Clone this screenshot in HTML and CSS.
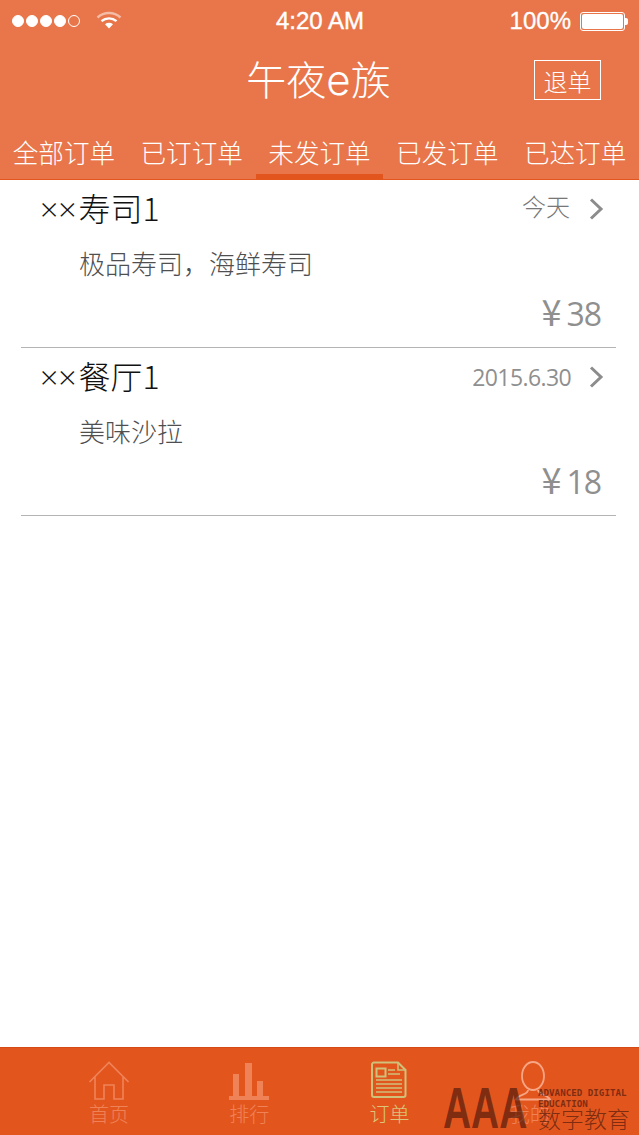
FILE: index.html
```html
<!DOCTYPE html>
<html lang="zh-CN">
<head>
<meta charset="utf-8">
<title>午夜e族</title>
<link rel="stylesheet" href="styles.css">
</head>
<body>
<div class="app">
  <header class="header">
    <div class="status">
      <div class="status-left">
        <span class="dots"><i class="dot"></i><i class="dot"></i><i class="dot"></i><i class="dot"></i><i class="dot dot-empty"></i></span>
        <svg class="wifi" width="26" height="20" viewBox="0 0 26 20"><path d="M1.500 7.500C8 1.500 18 1.500 24.500 7.500" fill="none" stroke="#fff" stroke-opacity=".5" stroke-width="2.400"/><path d="M5.500 11.200C9.800 7.400 16.200 7.400 20.500 11.200" fill="none" stroke="#fff" stroke-width="2.400"/><path d="M9 14.200C11.400 12.400 14.600 12.400 17 14.200L13 18.500Z" fill="#fff"/></svg>
      </div>
      <div class="clock">4:20 AM</div>
      <div class="status-right">
        <span class="pct">100%</span>
        <span class="battery"><span class="battery-fill"></span></span>
        <span class="battery-tip"></span>
      </div>
    </div>
    <div class="nav">
      <h1 class="title">午夜<span class="title-latin">e</span>族</h1>
      <button class="cancel">退单</button>
    </div>
    <nav class="tabs">
      <a class="tab">全部订单</a>
      <a class="tab">已订订单</a>
      <a class="tab tab-active">未发订单</a>
      <a class="tab">已发订单</a>
      <a class="tab">已达订单</a>
    </nav>
  </header>

  <main class="list">
    <article class="item">
      <div class="item-top">
        <span class="name"><span class="name-x">××</span>寿司1</span>
        <span class="when">今天</span>
        <svg class="chevron" width="16" height="24" viewBox="0 0 16 24"><path d="M3 2.500L13 12L3 21.500" fill="none" stroke="#8c8c8c" stroke-width="3"/></svg>
      </div>
      <p class="desc">极品寿司，海鲜寿司</p>
      <div class="price"><span class="yen">¥</span><span class="amount">38</span></div>
    </article>
    <article class="item">
      <div class="item-top">
        <span class="name"><span class="name-x">××</span>餐厅1</span>
        <span class="when when-date">2015.6.30</span>
        <svg class="chevron" width="16" height="24" viewBox="0 0 16 24"><path d="M3 2.500L13 12L3 21.500" fill="none" stroke="#8c8c8c" stroke-width="3"/></svg>
      </div>
      <p class="desc">美味沙拉</p>
      <div class="price"><span class="yen">¥</span><span class="amount">18</span></div>
    </article>
  </main>

  <footer class="tabbar">
    <a class="bar-item">
      <svg class="bar-icon" width="42" height="40" viewBox="0 0 42 40"><path d="M1.500 21L21 1.500L40.500 21M7 16V38H16V24H26V38H35V16" fill="none" stroke="#f08258" stroke-width="1.600"/></svg>
      <span>首页</span>
    </a>
    <a class="bar-item">
      <svg class="bar-icon" width="42" height="40" viewBox="0 0 42 40"><path d="M5 13H11V35H5ZM17 2H24V35H17ZM29 20H35V35H29ZM1 35H41V39H1Z" fill="#f08258"/></svg>
      <span>排行</span>
    </a>
    <a class="bar-item bar-active">
      <svg class="bar-icon" width="36" height="40" viewBox="0 0 36 40"><path d="M3 1.500H27L34.500 9V34A2 2 0 0 1 32.500 36H3A2 2 0 0 1 1 34V3.500A2 2 0 0 1 3 1.500Z" fill="none" stroke="#cfc07a" stroke-width="2"/><path d="M27 1.500V9H34.500" fill="none" stroke="#cfc07a" stroke-width="1.500"/><path d="M5.500 7.500H14.500V15.500H5.500Z" fill="none" stroke="#cfc07a" stroke-width="2"/><path d="M17 9H24M17 13H29M5 19H31M5 23H31M5 27H31M5 31H31" fill="none" stroke="#cfc07a" stroke-width="1.400"/></svg>
      <span>订单</span>
    </a>
    <a class="bar-item">
      <svg class="bar-icon" width="42" height="40" viewBox="0 0 42 40"><ellipse cx="24" cy="15" rx="11" ry="14" fill="none" stroke="#f6a585" stroke-width="1.800"/><path d="M19 29C19 34 10 33 7 38.500H41C38 33 29 34 29 29" fill="none" stroke="#f6a585" stroke-width="1.800"/></svg>
      <span>我的</span>
    </a>
  </footer>

  <div class="mark">
    <span class="mark-logo">AAA</span>
    <div class="mark-text">
      <span class="mark-en">ADVANCED DIGITAL EDUCATION</span>
      <span class="mark-cn">数字教育</span>
    </div>
  </div>
</div>
</body>
</html>
```
FILE: styles.css
```css
* { box-sizing: border-box; }
html, body { margin: 0; padding: 0; background: #fff; }
body { font-family: "Noto Sans CJK SC", "Liberation Sans", sans-serif; }
.app {
  position: relative;
  width: 639px;
  height: 1135px;
  display: flex;
  flex-direction: column;
  overflow: hidden;
}
.header {
  height: 180px;
  background: #e8764a;
  color: #fff;
  border-bottom: 1px solid #e2561e;
}
.status {
  height: 42px;
  display: grid;
  grid-template-columns: 1fr auto 1fr;
  align-items: center;
  padding: 0 11px 0 12px;
}
.status-left { display: flex; align-items: center; gap: 16px; }
.dots { display: flex; gap: 2px; }
.dot {
  width: 12px;
  height: 12px;
  border-radius: 50%;
  background: #fff;
  border: 1px solid #fff;
}
.dot-empty { background: transparent; }
.wifi { margin-top: -2px; }
.clock {
  font: 400 24px "Liberation Sans", sans-serif;
  -webkit-text-stroke: 0.4px #fff;
}
.status-right { display: flex; align-items: center; justify-content: flex-end; }
.pct {
  font: 400 24px "Liberation Sans", sans-serif;
  -webkit-text-stroke: 0.3px #fff;
  margin-right: 9px;
}
.battery {
  width: 45px;
  height: 19px;
  border: 1px solid #fff;
  border-radius: 3px;
  padding: 1px;
  display: flex;
}
.battery-fill { flex: 1; background: #fff; border-radius: 2px; }
.battery-tip { width: 3px; height: 7px; background: #fff; border-radius: 0 2px 2px 0; }
.nav {
  height: 76px;
  display: grid;
  grid-template-columns: 1fr auto 1fr;
  align-items: center;
}
.title {
  grid-column: 2;
  margin: 0 2px 0 0;
  font-size: 40px;
  font-weight: 300;
  line-height: 72px;
  height: 76px;
}
.title-latin { font-family: "Inter", sans-serif; font-weight: 300; font-size: 42px; }
.cancel {
  grid-column: 3;
  justify-self: end;
  width: 67px;
  height: 40px;
  margin-right: 38px;
  padding: 0;
  background: transparent;
  border: 1px solid #fff;
  color: #fff;
  font: 300 24px "Noto Sans CJK SC", sans-serif;
}
.tabs { display: grid; grid-template-columns: repeat(5, 1fr); height: 61px; }
.tab {
  display: block;
  text-align: center;
  font-size: 25.600px;
  font-weight: 300;
  line-height: 48px;
  padding-top: 10px;
  height: 61px;
}
.tab-active { border-bottom: 5px solid #e2561e; }
.list { flex: 1; }
.item { height: 168px; margin: 0 23px 0 21px; border-bottom: 1px solid #b4b4b4; }
.item-top {
  height: 58px;
  display: flex;
  align-items: center;
  padding: 0 12px 0 19px;
}
.name { font-size: 32px; font-weight: 300; color: #111; flex: 1; line-height: 54px; height: 58px; }
.name-x { font-family: "Open Sans", sans-serif; font-weight: 300; margin-right: 2px; }
.when { font-size: 24px; font-weight: 300; color: #777; margin-right: 18px; line-height: 52px; height: 58px; }
.when-date { font-family: "Open Sans", sans-serif; font-size: 23px; font-weight: 400; letter-spacing: -0.6px; color: #8f8f8f; line-height: 58px; margin-right: 17px; }
.desc { margin: 0; padding-left: 58px; height: 54px; line-height: 50px; font-size: 26px; font-weight: 300; color: #4f4f4f; }
.price {
  margin-top: -4px;
  text-align: right;
  padding-right: 15px;
  font: 400 32px/44px "Open Sans", sans-serif;
  letter-spacing: -1px;
  color: #8f8f8f;
}
.yen { font-family: "Noto Sans CJK SC", sans-serif; font-size: 36px; font-weight: 400; }
.amount { margin-left: 6px; }
.tabbar {
  height: 88px;
  background: #e2561e;
  border-top: 1px solid #d64a14;
  display: grid;
  grid-template-columns: repeat(4, 140.200px);
  padding: 13px 39px 0;
}
.bar-item {
  display: flex;
  flex-direction: column;
  align-items: center;
  color: #f08258;
  font-size: 20px;
  font-weight: 300;
  line-height: 26px;
}
.bar-icon { display: block; height: 40px; }
.bar-active { color: #dcc47a; }
.mark {
  position: absolute;
  left: 443px;
  top: 1084px;
  width: 192px;
  height: 50px;
  color: rgba(70, 20, 10, 0.65);
}
.mark-logo {
  position: absolute;
  left: 0;
  top: 0;
  font: 700 58px/48px "Liberation Sans", sans-serif;
  transform: scaleX(0.67);
  transform-origin: 0 0;
}
.mark-text { position: absolute; left: 95px; top: 3px; width: 97px; }
.mark-en { display: block; font: 700 9.200px/11px "DejaVu Sans Mono", monospace; }
.mark-cn { display: block; font-size: 23px; line-height: 24px; font-weight: 300; margin-top: -3px; }
```
